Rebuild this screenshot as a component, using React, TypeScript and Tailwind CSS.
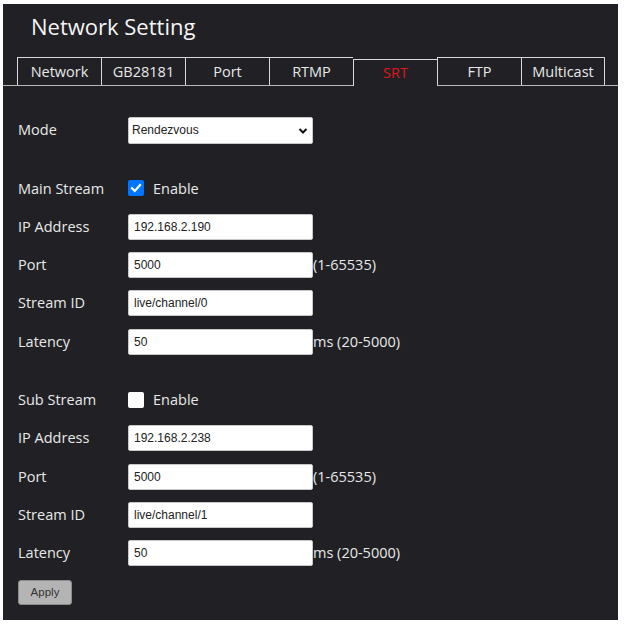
import React from "react";

const tabs = ["Network", "GB28181", "Port", "RTMP", "SRT", "FTP", "Multicast"];

function Label({ children }: { children: React.ReactNode }) {
  return <div className="w-[110px] shrink-0 text-[14.5px] text-[#e8e8e8]">{children}</div>;
}

function Field({ value, suffix }: { value: string; suffix?: string }) {
  return (
    <div className="flex items-center">
      <input
        readOnly
        value={value}
        className="w-[185px] h-[26px] bg-white border border-[#c8c8c8] rounded-[2px] px-[5px] text-[12px] text-[#222] outline-none"
        style={{ fontFamily: '"Liberation Sans", Arial, sans-serif' }}
      />
      {suffix && <span className="text-[14.5px] text-[#e8e8e8]">{suffix}</span>}
    </div>
  );
}

function Row({ label, children }: { label: string; children: React.ReactNode }) {
  return (
    <div className="flex items-center h-[38.3px]">
      <Label>{label}</Label>
      {children}
    </div>
  );
}

function Check({ checked }: { checked: boolean }) {
  return (
    <div className="flex items-center">
      {checked ? (
        <span className="w-[16px] h-[16px] rounded-[2px] bg-[#0075ff] flex items-center justify-center">
          <svg width="12" height="12" viewBox="0 0 12 12">
            <path d="M2 6.3 L4.8 9 L10 3" fill="none" stroke="white" strokeWidth="2.2" strokeLinecap="square" />
          </svg>
        </span>
      ) : (
        <span className="w-[16px] h-[16px] rounded-[2px] bg-white" />
      )}
      <span className="ml-[9px] text-[14.5px] text-[#e8e8e8]">Enable</span>
    </div>
  );
}

function StreamBlock({ name, checked, ip, port, sid }: { name: string; checked: boolean; ip: string; port: string; sid: string }) {
  return (
    <div className="flex flex-col">
      <Row label={name}>
        <Check checked={checked} />
      </Row>
      <Row label="IP Address">
        <Field value={ip} />
      </Row>
      <Row label="Port">
        <Field value={port} suffix="(1-65535)" />
      </Row>
      <Row label="Stream ID">
        <Field value={sid} />
      </Row>
      <Row label="Latency">
        <Field value="50" suffix="ms (20-5000)" />
      </Row>
    </div>
  );
}

export default function App() {
  return (
    <div className="w-[633px] h-[637px] bg-white pt-[4px] pl-[3px]" style={{ fontFamily: '"Open Sans", "Noto Sans", sans-serif' }}>
      <div className="w-[615px] h-[616px] bg-[#212125] flex flex-col">
        <div className="h-[53px] pl-[28px] pt-[7px] text-[22px] text-[#f4f4f4] leading-[30px]">Network Setting</div>
        <div className="flex pl-[14px] border-b border-[#b8b8b8] h-[29px] items-end">
          {tabs.map((t, i) => {
            const active = t === "SRT";
            const last = i === tabs.length - 1;
            return (
              <div
                key={t}
                className={
                  active
                    ? "w-[84px] h-[27px] -mb-px bg-[#212125] border-t border-l border-[#d8d8d8] flex items-center justify-center text-[14.5px] text-[#e0141e]"
                    : last
                      ? "w-[84px] h-[28px] border-t border-l border-r border-[#d8d8d8] flex items-center justify-center text-[14.5px] text-[#e8e8e8]"
                      : "w-[84px] h-[28px] border-t border-l border-[#d8d8d8] flex items-center justify-center text-[14.5px] text-[#e8e8e8]"
                }
              >
                {t}
              </div>
            );
          })}
        </div>
        <div className="pl-[15px] pt-[25px] flex flex-col">
          <Row label="Mode">
            <div className="relative w-[185px] h-[27px] bg-white border border-[#c8c8c8] rounded-[2px] flex items-center pl-[3px]">
              <span className="text-[12px] text-[#222]" style={{ fontFamily: '"Liberation Sans", Arial, sans-serif' }}>
                Rendezvous
              </span>
              <svg className="absolute right-[4px] top-[9px]" width="10" height="8" viewBox="0 0 10 8">
                <path d="M1.5 2 L5 5.5 L8.5 2" fill="none" stroke="#111" strokeWidth="2" />
              </svg>
            </div>
          </Row>
          <div className="h-[20px]" />
          <StreamBlock name="Main Stream" checked={true} ip="192.168.2.190" port="5000" sid="live/channel/0" />
          <div className="h-[20px]" />
          <StreamBlock name="Sub Stream" checked={false} ip="192.168.2.238" port="5000" sid="live/channel/1" />
          <div className="mt-[6px]">
            <button
              className="w-[54px] h-[25px] bg-[#b4b4b4] border border-[#8c8c8c] rounded-[3px] text-[11.5px] text-[#333]"
              style={{ fontFamily: '"Liberation Sans", Arial, sans-serif' }}
            >
              Apply
            </button>
          </div>
        </div>
      </div>
    </div>
  );
}
